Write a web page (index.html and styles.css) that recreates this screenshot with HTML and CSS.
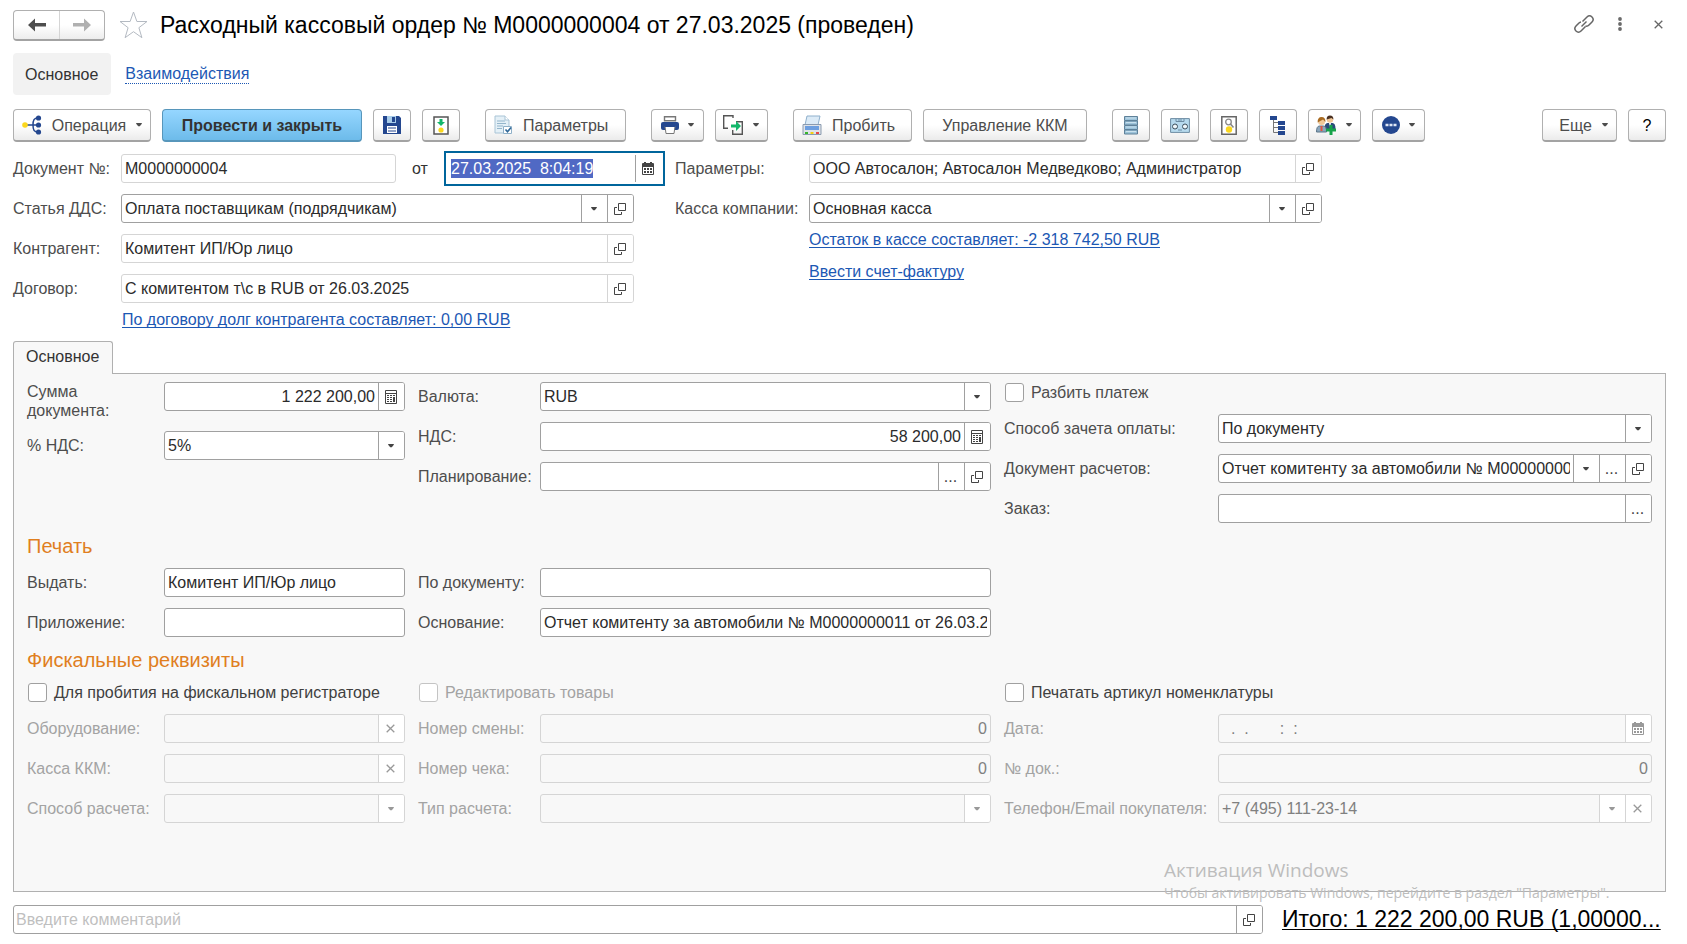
FILE: index.html
```html
<!DOCTYPE html>
<html lang="ru">
<head>
    <meta charset="UTF-8">
    <meta name="viewport" content="width=device-width, initial-scale=1.0">
    <title>Расходный кассовый ордер</title>
    <link rel="stylesheet" href="styles.css">
</head>
<body>
    <svg class="sprite" aria-hidden="true">
        <symbol id="caret" viewBox="0 0 7 5"><path d="M0 0h7v1L4.500 4h-2L0 1z" fill="currentColor"/></symbol>
        <symbol id="open" viewBox="0 0 12 12"><path d="M4.500 .5h7v7h-7zM3 4.500H.5v7h7V9" fill="none" stroke="currentColor"/></symbol>
        <symbol id="clear" viewBox="0 0 9 9"><path d="M.7.700l7.600 7.600M8.300.7L.7 8.300" fill="none" stroke="currentColor" stroke-width="1.300"/></symbol>
        <symbol id="calendar" viewBox="0 0 12 13">
            <path d="M0 2q0-1 1-1h1V0h2v1h4V0h2v1h1q1 0 1 1v10q0 1-1 1H1q-1 0-1-1z" fill="currentColor"/>
            <path d="M1 5h10v7H1z" fill="#fff"/>
            <path d="M2 6h2v2H2zM5 6h2v2H5zM8 6h2v2H8zM2 9h2v2H2zM5 9h2v2H5zM8 9h2v2H8z" fill="currentColor"/>
        </symbol>
        <symbol id="calc" viewBox="0 0 12 14">
            <path d="M.5.500h11v13H.5zM0 3.500h12" fill="none" stroke="currentColor"/>
            <path d="M2 5h2v1H2zM5 5h2v1H5zM8 5h2v1H8zM2 7h2v1H2zM5 7h2v1H5zM2 9h2v1H2zM5 9h2v1H5zM2 11h2v1H2zM5 11h2v1H5zM8 7h2v5H8z" fill="currentColor"/>
        </symbol>
    </svg>

    <div class="page">
        <header class="title-bar">
            <div class="nav-buttons">
                <button class="nav-btn" aria-label="Назад"><svg width="18" height="14" viewBox="0 0 18 14"><path d="M0 7l7-6.500V5h11v3.500H7v5z" fill="#4d4d4d"/></svg></button>
                <button class="nav-btn nav-forward" aria-label="Вперед"><svg width="18" height="14" viewBox="0 0 18 14"><path d="M18 7l-7-6.500V5H0v3.500h11v5z" fill="#b0b0b0"/></svg></button>
            </div>
            <button class="plain-btn" aria-label="Избранное"><svg width="29" height="28" viewBox="0 0 29 28"><path d="M14.500 1l3.400 9.500H28l-8.100 6.200 3 10-8.400-6-8.400 6 3-10L1 10.500h10.100z" fill="none" stroke="#b4bac2"/></svg></button>
            <h1>Расходный кассовый ордер № М0000000004 от 27.03.2025 (проведен)</h1>
            <div class="window-buttons">
                <button class="plain-btn" aria-label="Ссылка"><svg width="20" height="20" viewBox="0 0 20 20"><g fill="none" stroke="#666" stroke-width="1.500"><path d="M8.500 7.500L13 3a3.600 3.600 0 0 1 5 0 3.600 3.600 0 0 1 0 5l-3 3a3.600 3.600 0 0 1-3.500 1"/><path d="M11.500 12.500L7 17a3.600 3.600 0 0 1-5 0 3.600 3.600 0 0 1 0-5l3-3a3.600 3.600 0 0 1 2-1"/><path d="M7.500 12.500l5-5"/></g></svg></button>
                <button class="plain-btn" aria-label="Меню"><svg width="4" height="14" viewBox="0 0 4 14"><g fill="#6a6a6a"><circle cx="2" cy="2" r="1.900"/><circle cx="2" cy="7" r="1.900"/><circle cx="2" cy="12" r="1.900"/></g></svg></button>
                <button class="plain-btn" aria-label="Закрыть"><svg width="9" height="9" color="#666"><use href="#clear"/></svg></button>
            </div>
        </header>

        <nav class="sections">
            <span class="section-current">Основное</span>
            <a class="section-link" href="#">Взаимодействия</a>
        </nav>

        <div class="toolbar">
            <div class="group">
                <button class="btn btn-operation">
                    <svg width="20" height="20" viewBox="0 0 20 20"><path d="M3 10h8M16 3c-4 0-5 2-5 7s1 7 5 7M11 10h5" fill="none" stroke="#24478f" stroke-width="1.500"/><circle cx="3" cy="10" r="2.800" fill="#fbd71e"/><g fill="#24478f"><circle cx="16.500" cy="3" r="2.600"/><circle cx="16.500" cy="10" r="2.600"/><circle cx="16.500" cy="17" r="2.600"/></g></svg>
                    <span>Операция</span>
                    <svg class="caret"><use href="#caret"/></svg>
                </button>
                <button class="btn btn-primary">Провести и закрыть</button>
                <button class="btn btn-icon" aria-label="Записать"><svg width="18" height="18" viewBox="0 0 18 18"><path d="M0 0h16l2 2v16H0z" fill="#24478f"/><path d="M4 0h9v7H4z" fill="#a9cdea"/><path d="M9 1h3v5H9z" fill="#24478f"/><path d="M4 10h10v7H4z" fill="#fff"/><path d="M5 12h8M5 15h8" stroke="#24478f"/></svg></button>
                <button class="btn btn-icon" aria-label="Провести"><svg width="16" height="19" viewBox="0 0 16 19"><path d="M1 1h14v17H1z" fill="#fff" stroke="#555" stroke-width="1.500"/><path d="M6.500 3h3v3H12l-4 4-4-4h2.500z" fill="#12b76a"/><circle cx="8" cy="14" r="2.600" fill="#fbd71e"/></svg></button>
            </div>
            <div class="group">
                <button class="btn btn-params">
                    <svg width="19" height="20" viewBox="0 0 19 20"><path d="M1 1h10l4 4v13H1z" fill="#e4f0f7" stroke="#a9c4d6"/><path d="M11 1v4h4" fill="#fff" stroke="#a9c4d6"/><path d="M3 6h8M3 8.500h9M3 11h6M3 13.500h5" stroke="#93b5cb"/><path d="M9.500 11.500h8v7h-8z" fill="#fff" stroke="#8fb0c8"/><path d="M11.500 14.500l2 2.300 3.500-4.300" fill="none" stroke="#2f6797" stroke-width="1.600"/></svg>
                    <span>Параметры</span>
                </button>
            </div>
            <div class="group">
                <button class="btn btn-drop" aria-label="Печать">
                    <svg width="18" height="18" viewBox="0 0 18 18"><path d="M3.500.700h11v4h-11z" fill="#fff" stroke="#777" stroke-width="1.400"/><path d="M2 6h14q2 0 2 2v4q0 2-2 2H2q-2 0-2-2V8q0-2 2-2z" fill="#24478f"/><path d="M4 10.500h10l-1 7H5z" fill="#fff" stroke="#777"/><path d="M4 8h10v3H4z" fill="#24478f"/></svg>
                    <svg class="caret"><use href="#caret"/></svg>
                </button>
                <button class="btn btn-drop" aria-label="Создать на основании">
                    <svg width="21" height="20" viewBox="0 0 21 20"><path d="M10 3V.7H.7v12.600H5M13 6.700h6.300v12.600h-9.600V15" fill="none" stroke="#555" stroke-width="1.400"/><path d="M8 9.500h5V6l5 5-5 5v-3.500H8z" fill="#12b76a"/></svg>
                    <svg class="caret"><use href="#caret"/></svg>
                </button>
            </div>
            <div class="group">
                <button class="btn btn-punch">
                    <svg width="20" height="20" viewBox="0 0 20 20"><path d="M5 1h13l-2 9H3z" fill="#dcebf7" stroke="#8fb0cc"/><path d="M1 9.500h18v10H1z" fill="#dfe3e8" stroke="#8a9bb0"/><path d="M3 11h14v4H3z" fill="#6d9fe0"/><path d="M3 17h3v2H3z" fill="#36b52a"/><path d="M8.500 17h3v2h-3z" fill="#f3cf12"/><path d="M14 17h3v2h-3z" fill="#e84848"/></svg>
                    <span>Пробить</span>
                </button>
                <button class="btn btn-kkm">Управление ККМ</button>
            </div>
            <div class="group">
                <button class="btn btn-icon" aria-label="Список"><svg width="14" height="19" viewBox="0 0 14 19"><g fill="#9dc3da" stroke="#5f8199"><path d="M.5.500h13v4H.5zM.5 5h13v4H.5zM.5 9.500h13v4H.5zM.5 14h13v4H.5z"/></g><path d="M2 2h10M2 6.500h10M2 11h10M2 15.500h10" stroke="#c9e1ee"/></svg></button>
                <button class="btn btn-icon" aria-label="Кассета"><svg width="20" height="15" viewBox="0 0 20 15"><path d="M.6.600h18.800v13.800H.6z" fill="#b7daee" stroke="#6d8ca3"/><path d="M6 1v2.500h8V1M9 1v2M11 1v2" fill="none" stroke="#6d8ca3"/><circle cx="5" cy="8.500" r="2.500" fill="#eef6fa" stroke="#3c4f5d"/><circle cx="15" cy="8.500" r="2.500" fill="#eef6fa" stroke="#3c4f5d"/><path d="M8 12h4" stroke="#6d8ca3"/></svg></button>
                <button class="btn btn-icon" aria-label="Просмотр"><svg width="16" height="19" viewBox="0 0 16 19"><path d="M.8.800h14.400v17.400H.8z" fill="#fff" stroke="#666" stroke-width="1.500"/><circle cx="7.500" cy="6" r="2.800" fill="none" stroke="#888" stroke-width="1.300"/><path d="M9.500 8l3 3.500" stroke="#888" stroke-width="1.600"/><circle cx="8" cy="13.500" r="3.200" fill="#fbd71e"/></svg></button>
                <button class="btn btn-icon" aria-label="Структура"><svg width="16" height="19" viewBox="0 0 16 19"><path d="M3.500 3v13.500H8M3.500 6.500H8M3.500 11.500H8" fill="none" stroke="#777"/><path d="M0 0h7v4H0zM8 5h7v4H8zM8 10h7v4H8zM8 15h7v4H8z" fill="#24478f"/></svg></button>
                <button class="btn btn-drop" aria-label="Участники">
                    <svg width="21" height="20" viewBox="0 0 21 20"><path d="M8.500 14q0-6 3-6h5q3 0 3 6z" fill="#2b4a7a"/><circle cx="14" cy="4.500" r="3.200" fill="#f1c898"/><path d="M10.600 4.500Q10.500.5 14 .5t3.400 4L15.500 3z" fill="#4a3022"/><path d="M13 8l1 4 1-4z" fill="#fff"/><path d="M.5 17q0-6 3-6h4q3 0 3 6z" fill="#8ba7bd" stroke="#5b7488"/><circle cx="5.500" cy="6.500" r="3.500" fill="#f1c898"/><path d="M1.600 7.500Q1.500 2 5.500 2t4 5L7 4.500z" fill="#a86a20"/><path d="M4.500 11h2v5h-2z" fill="#e0523f"/><path d="M13.500 10h3v3.500H20v3h-3.500V20h-3v-3.500H10v-3h3.500z" fill="#16a34a"/></svg>
                    <svg class="caret"><use href="#caret"/></svg>
                </button>
                <button class="btn btn-drop" aria-label="Действия">
                    <svg width="18" height="18" viewBox="0 0 18 18"><circle cx="9" cy="9" r="9" fill="#24478f"/><path d="M3.500 7.800h3v2.400h-3zM7.500 7.800h3v2.400h-3zM11.500 7.800h3v2.400h-3z" fill="#dfe7f5"/></svg>
                    <svg class="caret"><use href="#caret"/></svg>
                </button>
            </div>
            <div class="group group-right">
                <button class="btn btn-more"><span>Еще</span><svg class="caret"><use href="#caret"/></svg></button>
                <button class="btn btn-icon btn-help">?</button>
            </div>
        </div>

        <div class="main-form">
            <div class="form-col head-left">
                <div class="row">
                    <label for="docNumber">Документ №:</label>
                    <div class="field readonly"><input id="docNumber" type="text" value="М0000000004" readonly></div>
                    <label class="from" for="docDate">от</label>
                    <div class="field field-date">
                        <input id="docDate" type="text" value="27.03.2025  8:04:19">
                        <button class="field-btn" aria-label="Выбрать дату"><svg width="12" height="13"><use href="#calendar"/></svg></button>
                    </div>
                </div>
                <div class="row short">
                    <label for="article">Статья ДДС:</label>
                    <div class="field">
                        <span class="drop"><select id="article"><option>Оплата поставщикам (подрядчикам)</option></select><span class="drop-mark"><svg class="caret"><use href="#caret"/></svg></span></span>
                        <button class="field-btn" aria-label="Открыть"><svg width="12" height="12"><use href="#open"/></svg></button>
                    </div>
                </div>
                <div class="row short">
                    <label for="partner">Контрагент:</label>
                    <div class="field readonly">
                        <input id="partner" type="text" value="Комитент ИП/Юр лицо" readonly>
                        <button class="field-btn" aria-label="Открыть"><svg width="12" height="12"><use href="#open"/></svg></button>
                    </div>
                </div>
                <div class="row short">
                    <label for="contract">Договор:</label>
                    <div class="field readonly">
                        <input id="contract" type="text" value="С комитентом т\с в RUB от 26.03.2025" readonly>
                        <button class="field-btn" aria-label="Открыть"><svg width="12" height="12"><use href="#open"/></svg></button>
                    </div>
                </div>
                <div class="links"><a href="#">По договору долг контрагента составляет: 0,00 RUB</a></div>
            </div>

            <div class="form-col head-right">
                <div class="row">
                    <label for="params">Параметры:</label>
                    <div class="field readonly">
                        <input id="params" type="text" value="ООО Автосалон; Автосалон Медведково; Администратор" readonly>
                        <button class="field-btn" aria-label="Открыть"><svg width="12" height="12"><use href="#open"/></svg></button>
                    </div>
                </div>
                <div class="row">
                    <label for="cashbox">Касса компании:</label>
                    <div class="field">
                        <span class="drop"><select id="cashbox"><option>Основная касса</option></select><span class="drop-mark"><svg class="caret"><use href="#caret"/></svg></span></span>
                        <button class="field-btn" aria-label="Открыть"><svg width="12" height="12"><use href="#open"/></svg></button>
                    </div>
                </div>
                <div class="links">
                    <a href="#">Остаток в кассе составляет: -2 318 742,50 RUB</a>
                    <a href="#">Ввести счет-фактуру</a>
                </div>
            </div>
        </div>

        <div class="tabs"><button class="tab">Основное</button></div>

        <main class="panel">
            <div class="columns">
                <div class="form-col col-a">
                    <div class="row">
                        <label class="two-lines" for="amount">Сумма документа:</label>
                        <div class="field">
                            <input class="number" id="amount" type="text" value="1 222 200,00">
                            <button class="field-btn" aria-label="Калькулятор"><svg width="12" height="14"><use href="#calc"/></svg></button>
                        </div>
                    </div>
                    <div class="row">
                        <label for="vatRate">% НДС:</label>
                        <div class="field"><span class="drop"><select id="vatRate"><option>5%</option></select><span class="drop-mark"><svg class="caret"><use href="#caret"/></svg></span></span></div>
                    </div>
                </div>
                <div class="form-col col-b">
                    <div class="row">
                        <label for="currency">Валюта:</label>
                        <div class="field"><span class="drop"><select id="currency"><option>RUB</option></select><span class="drop-mark"><svg class="caret"><use href="#caret"/></svg></span></span></div>
                    </div>
                    <div class="row">
                        <label for="vat">НДС:</label>
                        <div class="field">
                            <input class="number" id="vat" type="text" value="58 200,00">
                            <button class="field-btn" aria-label="Калькулятор"><svg width="12" height="14"><use href="#calc"/></svg></button>
                        </div>
                    </div>
                    <div class="row">
                        <label for="planning">Планирование:</label>
                        <div class="field">
                            <input id="planning" type="text">
                            <button class="field-btn">...</button>
                            <button class="field-btn" aria-label="Открыть"><svg width="12" height="12"><use href="#open"/></svg></button>
                        </div>
                    </div>
                </div>
                <div class="form-col col-c">
                    <div class="check"><input type="checkbox" id="split"><label for="split">Разбить платеж</label></div>
                    <div class="row">
                        <label for="offset">Способ зачета оплаты:</label>
                        <div class="field"><span class="drop"><select id="offset"><option>По документу</option></select><span class="drop-mark"><svg class="caret"><use href="#caret"/></svg></span></span></div>
                    </div>
                    <div class="row">
                        <label for="settlement">Документ расчетов:</label>
                        <div class="field">
                            <span class="drop"><select id="settlement"><option>Отчет комитенту за автомобили № М0000000011 от 26.03.2025</option></select><span class="drop-mark"><svg class="caret"><use href="#caret"/></svg></span></span>
                            <button class="field-btn">...</button>
                            <button class="field-btn" aria-label="Открыть"><svg width="12" height="12"><use href="#open"/></svg></button>
                        </div>
                    </div>
                    <div class="row">
                        <label for="order">Заказ:</label>
                        <div class="field"><input id="order" type="text"><button class="field-btn">...</button></div>
                    </div>
                </div>
            </div>

            <h2>Печать</h2>
            <div class="columns">
                <div class="form-col col-a">
                    <div class="row"><label for="issueTo">Выдать:</label><div class="field"><input id="issueTo" type="text" value="Комитент ИП/Юр лицо"></div></div>
                    <div class="row"><label for="attachment">Приложение:</label><div class="field"><input id="attachment" type="text"></div></div>
                </div>
                <div class="form-col col-b">
                    <div class="row"><label for="byDoc">По документу:</label><div class="field"><input id="byDoc" type="text"></div></div>
                    <div class="row"><label for="reason">Основание:</label><div class="field"><input id="reason" type="text" value="Отчет комитенту за автомобили № М0000000011 от 26.03.2025"></div></div>
                </div>
            </div>

            <h2>Фискальные реквизиты</h2>
            <div class="columns">
                <div class="form-col col-a">
                    <div class="check dark"><input type="checkbox" id="fiscal"><label for="fiscal">Для пробития на фискальном регистраторе</label></div>
                    <div class="row disabled">
                        <label for="device">Оборудование:</label>
                        <div class="field"><input id="device" type="text" disabled><button class="field-btn" aria-label="Очистить" disabled><svg width="9" height="9"><use href="#clear"/></svg></button></div>
                    </div>
                    <div class="row disabled">
                        <label for="kkm">Касса ККМ:</label>
                        <div class="field"><input id="kkm" type="text" disabled><button class="field-btn" aria-label="Очистить" disabled><svg width="9" height="9"><use href="#clear"/></svg></button></div>
                    </div>
                    <div class="row disabled">
                        <label for="payMethod">Способ расчета:</label>
                        <div class="field"><span class="drop"><select id="payMethod" disabled><option></option></select><span class="drop-mark"><svg class="caret"><use href="#caret"/></svg></span></span></div>
                    </div>
                </div>
                <div class="form-col col-b">
                    <div class="check disabled"><input type="checkbox" id="editGoods" disabled><label for="editGoods">Редактировать товары</label></div>
                    <div class="row disabled">
                        <label for="shift">Номер смены:</label>
                        <div class="field"><input class="number" id="shift" type="text" value="0" disabled></div>
                    </div>
                    <div class="row disabled">
                        <label for="receipt">Номер чека:</label>
                        <div class="field"><input class="number" id="receipt" type="text" value="0" disabled></div>
                    </div>
                    <div class="row disabled">
                        <label for="payType">Тип расчета:</label>
                        <div class="field"><span class="drop"><select id="payType" disabled><option></option></select><span class="drop-mark"><svg class="caret"><use href="#caret"/></svg></span></span></div>
                    </div>
                </div>
                <div class="form-col col-c">
                    <div class="check dark"><input type="checkbox" id="sku"><label for="sku">Печатать артикул номенклатуры</label></div>
                    <div class="row disabled">
                        <label for="fiscalDate">Дата:</label>
                        <div class="field"><input id="fiscalDate" type="text" value="  .  .       :  :" disabled><button class="field-btn" aria-label="Выбрать дату" disabled><svg width="12" height="13"><use href="#calendar"/></svg></button></div>
                    </div>
                    <div class="row disabled">
                        <label for="fiscalDoc">№ док.:</label>
                        <div class="field"><input class="number" id="fiscalDoc" type="text" value="0" disabled></div>
                    </div>
                    <div class="row disabled">
                        <label for="contact">Телефон/Email покупателя:</label>
                        <div class="field">
                            <span class="drop"><select id="contact" disabled><option>+7 (495) 111-23-14</option></select><span class="drop-mark"><svg class="caret"><use href="#caret"/></svg></span></span>
                            <button class="field-btn" aria-label="Очистить" disabled><svg width="9" height="9"><use href="#clear"/></svg></button>
                        </div>
                    </div>
                </div>
            </div>
        </main>

        <footer class="bottom">
            <div class="field comment">
                <input type="text" placeholder="Введите комментарий" aria-label="Комментарий">
                <button class="field-btn" aria-label="Открыть"><svg width="12" height="12"><use href="#open"/></svg></button>
            </div>
            <a class="total" href="#">Итого: 1 222 200,00 RUB (1,00000...</a>
        </footer>

        <div class="watermark">
            <p class="watermark-title">Активация Windows</p>
            <p>Чтобы активировать Windows, перейдите в раздел "Параметры".</p>
        </div>
    </div>

    <script>
        const docDate = document.getElementById('docDate');
        docDate.focus();
        docDate.select();
    </script>
</body>
</html>
```

FILE: styles.css
```css
* {
    box-sizing: border-box;
}
body {
    margin: 0;
    background: #fff;
    color: #4d4d4d;
    font: 16px/19px "Liberation Sans", Arial, sans-serif;
}
button, input, select {
    font: inherit;
    color: inherit;
    margin: 0;
}
button {
    cursor: pointer;
}
a {
    color: #1c58b4;
    text-decoration: underline 1px;
    text-underline-offset: 2px;
    text-decoration-skip-ink: none;
}
.sprite {
    display: none;
}
.page {
    position: relative;
    display: flex;
    flex-direction: column;
    min-height: 100vh;
    padding: 10px 21px 10px 13px;
}

/* title */
.title-bar {
    display: flex;
    align-items: center;
    height: 30px;
}
.nav-buttons {
    display: flex;
    height: 31px;
    border: 1px solid #b0b0b0;
    border-bottom: 2px solid #a3a3a3;
    border-radius: 4px;
    background: linear-gradient(#fff 50%, #ededed);
}
.nav-btn {
    display: flex;
    align-items: center;
    justify-content: center;
    width: 45px;
    padding: 0;
    border: 0;
    background: none;
}
.nav-forward {
    border-left: 1px solid #d5d5d5;
}
.plain-btn {
    display: flex;
    padding: 0;
    border: 0;
    background: none;
}
.nav-buttons + .plain-btn {
    margin: 0 12px 0 14px;
}
h1 {
    margin: 0;
    color: #000;
    font-size: 23px;
    line-height: 28px;
    font-weight: normal;
    white-space: nowrap;
}
.window-buttons {
    display: flex;
    align-items: center;
    margin: 0 3px 2px auto;
}
.window-buttons .plain-btn + .plain-btn {
    margin-left: 24px;
}
.window-buttons .plain-btn:last-child {
    margin-left: 32px;
}

/* sections */
.sections {
    display: flex;
    align-items: center;
    gap: 14px;
    margin-top: 13px;
}
.section-current {
    padding: 12px 13px 11px 12px;
    border-radius: 4px;
    background: #f2f2f2;
    color: #333;
}
.section-link {
    border-bottom: 1px dotted #1c58b4;
    text-decoration: none;
    line-height: 18px;
}

/* toolbar */
.toolbar {
    display: flex;
    gap: 25px;
    margin-top: 14px;
}
.group {
    display: flex;
    gap: 11px;
}
.group-right {
    margin-left: auto;
}
.btn {
    display: flex;
    align-items: center;
    justify-content: center;
    height: 33px;
    padding: 0;
    border: 1px solid #b0b0b0;
    border-bottom: 2px solid #a3a3a3;
    border-radius: 4px;
    background: linear-gradient(#fff 50%, #ebebeb);
    white-space: nowrap;
}
.btn-icon {
    width: 38px;
}
.btn-drop {
    width: 53px;
    gap: 9px;
    padding-right: 1px;
}
.btn-operation {
    width: 138px;
    gap: 10px;
}
.btn-primary {
    width: 200px;
    border-color: #5796bb;
    background: linear-gradient(#95d6ff, #6dbbea);
    color: #333;
    font-weight: bold;
}
.btn-params, .btn-punch {
    justify-content: flex-start;
    gap: 10px;
    padding-left: 8px;
}
.btn-params {
    width: 141px;
}
.btn-punch {
    width: 119px;
}
.btn-kkm {
    width: 164px;
}
.btn-more {
    width: 75px;
    gap: 10px;
    padding-left: 8px;
}
.btn-help {
    color: #000;
}
.caret {
    width: 6px;
    height: 4px;
}

/* form rows */
.main-form {
    display: grid;
    grid-template-columns: 652fr 647fr 334fr;
    gap: 10px;
    margin-top: 12px;
}
.form-col {
    display: flex;
    flex-direction: column;
    gap: 11px;
    min-width: 0;
}
.row {
    display: flex;
    align-items: flex-start;
}
.row label {
    flex: none;
    padding: 5px 0;
    white-space: nowrap;
}
.row label.two-lines {
    padding: 0 50px 0 0;
    white-space: normal;
}
.head-left .row label {
    width: 108px;
}
.head-left .row label.from {
    width: 48px;
    text-align: center;
    color: #333;
}
.head-right .row label {
    width: 134px;
}
.col-a .row label {
    width: 137px;
}
.col-b .row label {
    width: 122px;
}
.col-c .row label {
    width: 214px;
}
.short {
    margin-right: 31px;
}
.links {
    display: flex;
    flex-direction: column;
    align-items: flex-start;
    gap: 13px;
    margin-top: -4px;
    padding-left: 109px;
}
.head-right .links {
    padding-left: 134px;
}

/* fields */
.field {
    display: flex;
    flex: 1;
    min-width: 0;
    height: 29px;
    border: 1px solid #a0a0a0;
    border-radius: 3px;
    background: #fff;
    color: #2b2b2b;
    overflow: hidden;
}
.field input {
    flex: 1;
    width: 0;
    min-width: 0;
    padding: 0 3px;
    border: 0;
    outline: 0;
    background: none;
}
.field .number {
    text-align: right;
}
.field input::placeholder {
    color: #bfbfbf;
}
.field-btn, .drop-mark {
    display: flex;
    flex: none;
    align-items: center;
    justify-content: center;
    width: 26px;
    padding: 0 2px 0 0;
    border: 0;
    border-left: 1px solid #a0a0a0;
    background: #fff;
    color: #444;
}
.drop {
    display: grid;
    flex: 1;
    min-width: 0;
}
.drop select {
    grid-area: 1 / 1;
    width: 100%;
    min-width: 0;
    padding: 0 29px 0 3px;
    border: 0;
    outline: 0;
    background: none;
    opacity: 1;
    appearance: none;
}
.drop-mark {
    grid-area: 1 / 1;
    justify-self: end;
    pointer-events: none;
}
.readonly, .readonly .field-btn {
    border-color: #d5d5d5;
}
.field-date {
    flex: 0 0 221px;
    height: 35px;
    margin: -3px 0;
    padding: 2px;
    border: 2px solid #00659c;
    border-radius: 0;
}
.field-date ::selection {
    background: #5069c4;
    color: #fff;
}
.disabled label {
    color: #a3a3a3;
}
.disabled .field {
    border-color: #d5d5d5;
    background: #f8f8f8;
    color: #808080;
}
.disabled .field-btn, .disabled .drop-mark {
    border-color: #d5d5d5;
    color: #999;
}

/* checkboxes */
.check {
    display: flex;
    align-items: center;
    height: 21px;
    white-space: nowrap;
}
.check input {
    flex: none;
    width: 19px;
    height: 19px;
    margin: 0 7px 0 1px;
    border: 1px solid #a0a0a0;
    border-radius: 3px;
    background: #fff;
    appearance: none;
}
.check input:checked {
    background: #5069c4;
}
.check.disabled input {
    border-color: #c4c4c4;
}
.check.dark {
    color: #404040;
}

/* tab panel */
.tabs {
    display: flex;
    margin: 12px 0 -1px;
}
.tab {
    position: relative;
    height: 33px;
    padding: 0 13px 3px 12px;
    border: 1px solid #b0b0b0;
    border-bottom: 0;
    border-radius: 3px 3px 0 0;
    background: #f8f8f8;
    color: #333;
}
.panel {
    flex: 1;
    padding: 8px 13px;
    border: 1px solid #b0b0b0;
    background: #f8f8f8;
}
.columns {
    display: grid;
    grid-template-columns: 378fr 573fr 648fr;
    gap: 13px;
}
h2 {
    margin: 11px 0 10px;
    color: #e07f1f;
    font-size: 20px;
    line-height: 24px;
    font-weight: normal;
}

/* bottom */
.bottom {
    display: grid;
    grid-template-columns: 1250fr 384fr;
    align-items: center;
    gap: 19px;
    margin-top: 13px;
}
.comment input {
    padding: 0 2px;
}
.total {
    color: #000;
    font-size: 23px;
    line-height: 29px;
    white-space: nowrap;
}
.watermark {
    position: absolute;
    right: 69px;
    bottom: 41px;
    width: 454px;
    color: #bdbdbd;
    font-family: "Open Sans", "Noto Sans", sans-serif;
    font-size: 14px;
    line-height: 20px;
    white-space: nowrap;
    pointer-events: none;
}
.watermark p {
    margin: 0;
}
.watermark .watermark-title {
    font-size: 19px;
    line-height: 26px;
}
```
